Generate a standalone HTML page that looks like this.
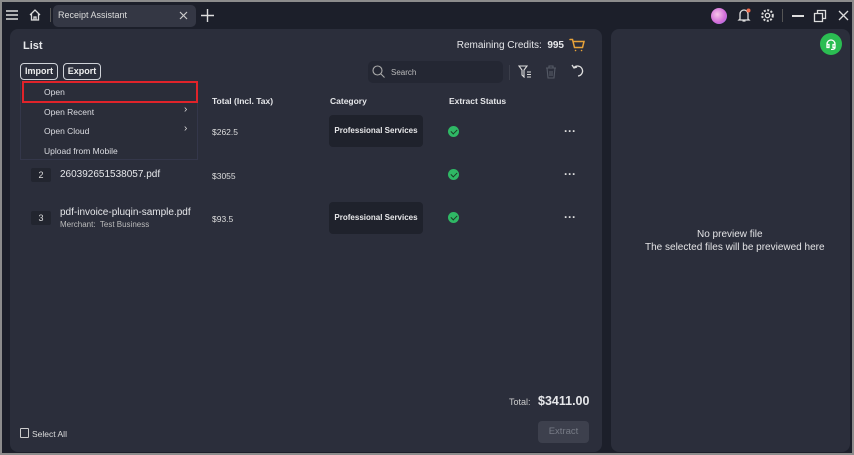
<!DOCTYPE html>
<html><head><style>
*{margin:0;padding:0;box-sizing:border-box}
body{width:854px;height:455px;background:#8c8c8c;font-family:"Liberation Sans",sans-serif;color:#e6e7ea;overflow:hidden;position:relative}
.app{position:absolute;left:2px;top:2px;width:850px;height:451px;background:#1c1f2a}
.abs{position:absolute}
.panel{position:absolute;background:#2b2e3b;border-radius:8px}
.t{position:absolute;white-space:nowrap}
.btn{position:absolute;border:1px solid #cfd2d8;border-radius:4px;font-size:9px;font-weight:bold;height:17px;line-height:15px;text-align:center;color:#eee}
.num{position:absolute;width:20px;height:14px;background:#22252f;border-radius:2px;font-size:9px;text-align:center;line-height:14px;color:#ddd}
.cat{position:absolute;width:94px;height:32px;background:#1f222c;border-radius:4px;font-size:8px;font-weight:bold;text-align:center;line-height:32px;color:#e8e8ea}
.chk{position:absolute;width:11px;height:11px;border-radius:50%;background:#2fb865}
.chk:after{content:"";position:absolute;left:3.5px;top:2px;width:3px;height:5px;border:solid #1c3a25;border-width:0 1.5px 1.5px 0;transform:rotate(45deg)}
.dots{position:absolute;font-size:12px;font-weight:bold;color:#ddd}
.mi{position:absolute;font-size:8.5px;color:#dcdde2}
</style></head><body><div class="app">
<svg class="abs" style="left:3px;top:7px" width="14" height="12"><path d="M1 2h12M1 6h12M1 10h12" stroke="#ddd" stroke-width="1.5"/></svg>
<svg class="abs" style="left:26px;top:6px" width="14" height="14"><path d="M2 7L7 2l5 5M3.5 6v6h7V6M6 12V9h2v3" stroke="#ddd" stroke-width="1.3" fill="none"/></svg>
<div class="abs" style="left:48px;top:6px;width:1px;height:14px;background:#555"></div>
<div class="abs" style="left:51px;top:3px;width:143px;height:22px;background:#343744;border-radius:5px"></div>
<div class="t" style="left:56px;top:8px;font-size:9px;color:#ddd">Receipt Assistant</div>
<svg class="abs" style="left:177px;top:9px" width="9" height="9"><path d="M1 1l7 7M8 1L1 8" stroke="#ccc" stroke-width="1.2"/></svg>
<svg class="abs" style="left:199px;top:7px" width="13" height="13"><path d="M6.5 0v13M0 6.5h13" stroke="#ddd" stroke-width="1.4"/></svg>
<div class="abs" style="left:709px;top:6px;width:16px;height:16px;border-radius:50%;background:radial-gradient(circle at 40% 40%,#f7c6ea,#d06ad8 60%,#8a7cf0)"></div>
<svg class="abs" style="left:735px;top:6px" width="14" height="15"><path d="M3 11V6a4 4 0 018 0v5l1 1H2zM5.5 13h3" stroke="#ddd" stroke-width="1.3" fill="none"/><circle cx="11.5" cy="2.5" r="2" fill="#f26a4b"/></svg>
<svg class="abs" style="left:758px;top:6px" width="15" height="15"><circle cx="7.5" cy="7.5" r="2.2" stroke="#ddd" stroke-width="1.3" fill="none"/><circle cx="7.5" cy="7.5" r="5.3" stroke="#ddd" stroke-width="2" stroke-dasharray="2 1.5" fill="none"/></svg>
<div class="abs" style="left:780px;top:7px;width:1px;height:13px;background:#555"></div>
<div class="abs" style="left:790px;top:13px;width:12px;height:1.5px;background:#ddd"></div>
<svg class="abs" style="left:811px;top:7px" width="14" height="14"><path d="M1.5 4.5h8v8h-8zM4.5 4.5v-3h8v8h-3" stroke="#ddd" stroke-width="1.3" fill="none"/></svg>
<svg class="abs" style="left:836px;top:8px" width="11" height="11"><path d="M1 1l9 9M10 1L1 10" stroke="#ddd" stroke-width="1.3"/></svg>

<div class="panel" style="left:8px;top:27px;width:592px;height:423px"></div>
<div class="panel" style="left:609px;top:27px;width:239px;height:423px"></div>

<div class="t" style="left:21px;top:38px;font-size:11px;font-weight:bold">List</div>
<div class="t" style="right:288px;top:38px;font-size:10px">Remaining Credits:&nbsp; <b>995</b></div>
<svg class="abs" style="left:567px;top:36px" width="16" height="14"><path d="M1 1.5h2.5l2 8h8l1.5-6H4.5M6.5 12.5h.1M12.5 12.5h.1" stroke="#e8a33a" stroke-width="1.5" fill="none" stroke-linecap="round"/></svg>
<div class="abs" style="left:818px;top:31px;width:22px;height:22px;border-radius:50%;background:#2bbd52"></div>
<svg class="abs" style="left:823px;top:36px" width="12" height="12"><path d="M2 8V6a4 4 0 018 0v2M2 6.5h2v3H2zM8 6.5h2v3H8zM10 9.5c0 1.5-2 2-4 2" stroke="#fff" stroke-width="1.3" fill="none"/></svg>

<div class="btn" style="left:18px;top:61px;width:38px">Import</div>
<div class="btn" style="left:61px;top:61px;width:38px">Export</div>

<div class="abs" style="left:366px;top:59px;width:135px;height:22px;background:#242733;border-radius:5px"></div>
<svg class="abs" style="left:370px;top:63px" width="13" height="13"><circle cx="5.5" cy="5.5" r="4.5" stroke="#aaa" stroke-width="1.1" fill="none"/><path d="M9 9l3.5 3.5" stroke="#aaa" stroke-width="1.1"/></svg>
<div class="t" style="left:389px;top:66px;font-size:8px;color:#bbb">Search</div>
<div class="abs" style="left:507px;top:63px;width:1px;height:15px;background:#3b3e4a"></div>
<svg class="abs" style="left:516px;top:63px" width="14" height="13"><path d="M1 1h8L6 5v7L4 10V5zM9 7h4M9 9.5h4M9 12h4" stroke="#ddd" stroke-width="1.1" fill="none"/></svg>
<svg class="abs" style="left:543px;top:63px" width="12" height="14"><path d="M1 3h10M4 3V1h4v2M2 3l1 10h6l1-10M5 6v5M7 6v5" stroke="#555a66" stroke-width="1.1" fill="none"/></svg>
<svg class="abs" style="left:569px;top:62px" width="14" height="14"><path d="M3 3.5A5 5 0 117 12" stroke="#ddd" stroke-width="1.3" fill="none" stroke-dasharray="20 2"/><path d="M1 1l2 3 3-1" stroke="#ddd" stroke-width="1.3" fill="none"/></svg>

<div class="t" style="left:210px;top:94px;font-size:8.5px;font-weight:bold">Total (Incl. Tax)</div>
<div class="t" style="left:328px;top:94px;font-size:8.5px;font-weight:bold">Category</div>
<div class="t" style="left:447px;top:94px;font-size:8.5px;font-weight:bold">Extract Status</div>

<div class="t" style="left:210px;top:125px;font-size:8.5px;color:#ddd">$262.5</div>
<div class="cat" style="left:327px;top:113px">Professional Services</div>
<div class="chk" style="left:446px;top:124px"></div>
<div class="dots" style="left:562px;top:122px">···</div>
<div class="num" style="left:29px;top:166px">2</div>
<div class="t" style="left:58px;top:167px;font-size:10px">260392651538057.pdf</div>
<div class="t" style="left:210px;top:169px;font-size:8.5px;color:#ddd">$3055</div>
<div class="chk" style="left:446px;top:167px"></div>
<div class="dots" style="left:562px;top:165px">···</div>
<div class="num" style="left:29px;top:209px">3</div>
<div class="t" style="left:58px;top:205px;font-size:10px">pdf-invoice-pluqin-sample.pdf</div>
<div class="t" style="left:58px;top:218px;font-size:8px;color:#bbb">Merchant:&nbsp; Test Business</div>
<div class="t" style="left:210px;top:212px;font-size:8.5px;color:#ddd">$93.5</div>
<div class="cat" style="left:327px;top:200px">Professional Services</div>
<div class="chk" style="left:446px;top:210px"></div>
<div class="dots" style="left:562px;top:208px">···</div>

<div class="abs" style="left:18px;top:79px;width:178px;height:79px;background:#2a2d39;border:1px solid #34374a;border-top:none"></div>
<div class="abs" style="left:20px;top:79px;width:176px;height:22px;border:2px solid #e0232a"></div>
<div class="mi" style="left:42px;top:85px">Open</div>
<div class="mi" style="left:42px;top:105px">Open Recent</div>
<div class="mi" style="left:42px;top:124px">Open Cloud</div>
<div class="mi" style="left:42px;top:144px">Upload from Mobile</div>
<div class="t" style="left:182px;top:102px;font-size:10px;color:#ddd">›</div>
<div class="t" style="left:182px;top:121px;font-size:10px;color:#ddd">›</div>

<div class="t" style="left:507px;top:395px;font-size:9px;color:#ccc">Total:</div>
<div class="t" style="left:536px;top:392px;font-size:12.5px;font-weight:bold">$3411.00</div>
<div class="abs" style="left:18px;top:426px;width:9px;height:10px;border:1px solid #ccc;border-radius:1px"></div>
<div class="t" style="left:30px;top:427px;font-size:8.5px;color:#ddd">Select All</div>
<div class="abs" style="left:536px;top:419px;width:51px;height:22px;background:#3d404d;border-radius:4px;font-size:9.5px;color:#777b86;text-align:center;line-height:22px">Extract</div>

<div class="t" style="left:695px;top:227px;font-size:10px;color:#e4e4e6">No preview file</div>
<div class="t" style="left:643px;top:240px;font-size:10px;color:#e4e4e6">The selected files will be previewed here</div>
</div></body></html>
